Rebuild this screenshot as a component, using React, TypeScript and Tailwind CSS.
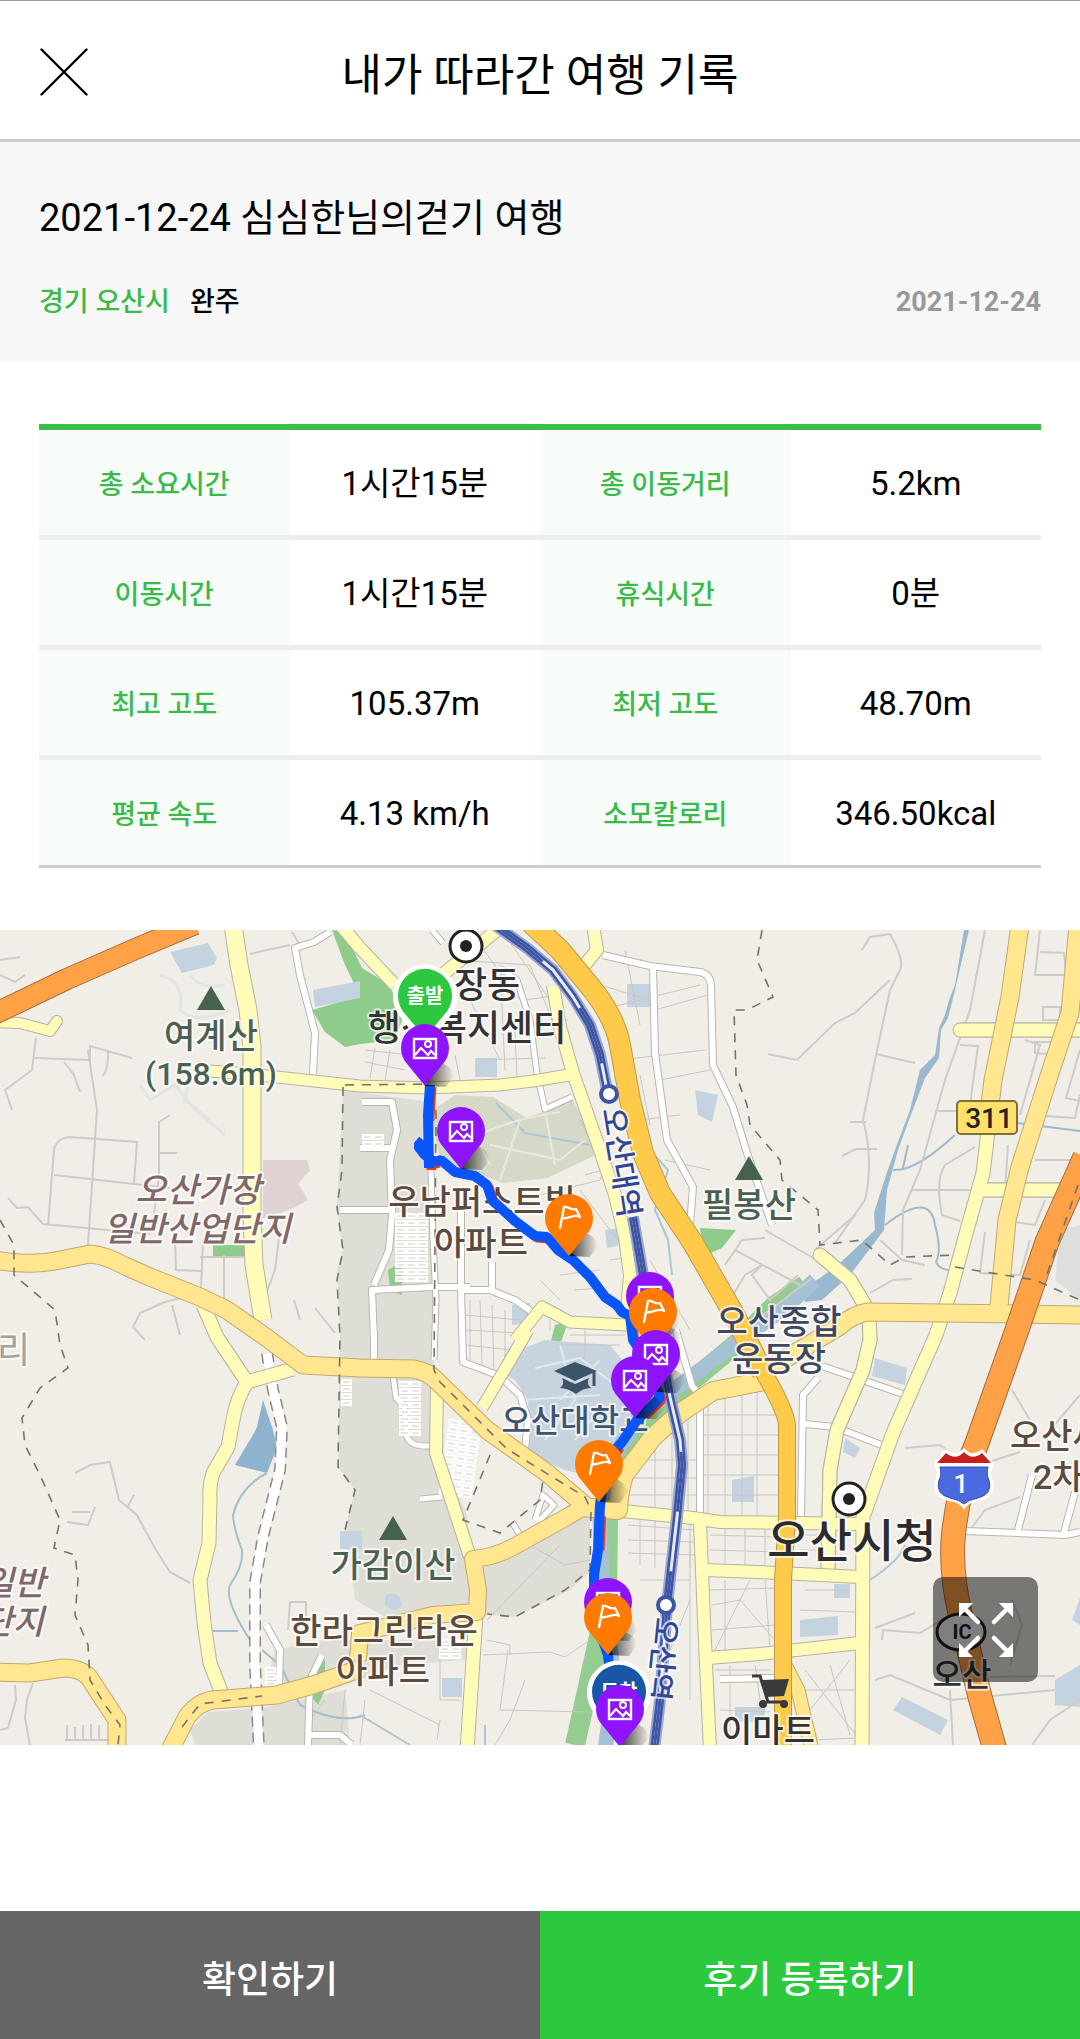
import type { ReactNode } from 'react';

type RoadKind = 'white' | 'pale' | 'yellow' | 'amber' | 'orange';

const ROAD_COLORS: Record<RoadKind, [string, string]> = {
  white: ['#ffffff', '#b9b6b0'],
  pale: ['#fffbb8', '#b7b2a0'],
  yellow: ['#ffe68f', '#c0a870'],
  amber: ['#ffca49', '#b89a50'],
  orange: ['#ffa147', '#a36b3c'],
};

type Road = { w: number; d: string };

/* Casings first and fills second, so junctions of one class open into each other. */
function Roads({ kind, roads, cap = 'butt' }: { kind: RoadKind; roads: Road[]; cap?: 'butt' | 'round' }) {
  const [fill, casing] = ROAD_COLORS[kind];
  return (
    <g fill="none" strokeLinejoin="round" strokeLinecap={cap}>
      {roads.map((r) => (
        <path key={'c' + r.d} d={r.d} stroke={casing} strokeWidth={r.w + 2} />
      ))}
      {roads.map((r) => (
        <path key={'f' + r.d} d={r.d} stroke={fill} strokeWidth={r.w} />
      ))}
    </g>
  );
}

const WHITE: Road[] = [
  { w: 6, d: 'M330 932 L314 942 L295 948 L300 975 L315 1033 L313 1074' },
  { w: 6, d: 'M603 955 L650 966 L700 972 Q710 974 711 985 L713 1065 L733 1107 L747 1153 L772 1225' },
  { w: 6, d: 'M653 967 L655 1053 L667 1140 L693 1187 L690 1225' },
  { w: 5, d: 'M432 930 L443 943 M500 968 L517 980 L530 1020 L537 1073 L545 1109 L572 1097' },
  { w: 6, d: 'M462 1290 L490 1290 L515 1300 L535 1314' },
  { w: 6, d: 'M461 1210 L461 1290 M492 1262 L492 1290 M432 1287 L470 1287 M461 1290 L463 1362 L500 1376 L520 1395 L528 1420 L525 1450' },
  { w: 6, d: 'M374 1285 L389 1250 L392 1215 L390 1160 L397 1130 L392 1102 L362 1102 M360 1148 L390 1148 M340 1210 L395 1210 M374 1340 L372 1290 L432 1287 M374 1330 L374 1362' },
  { w: 5, d: 'M431 1170 L433 1240 L436 1300 L434 1360' },
  { w: 5, d: 'M393 1375 L396 1398 L404 1405 L407 1437 Q411 1447 430 1446 M420 1499 L442 1497' },
  { w: 6, d: 'M676 1330 L692 1386 L700 1395 L700 1516' },
  { w: 6, d: 'M822 1366 L903 1394 M818 1378 L803 1395 L801 1516 M805 1424 L835 1427 L884 1446' },
  { w: 6, d: 'M965 1531 L1066 1535 M1018 1530 L1032 1475 M1064 1533 L1075 1492 M1066 1535 L1080 1532' },
  { w: 6, d: 'M266 1625 L280 1650 L279 1685 M720 1679 L775 1678' },
  { w: 6, d: 'M322 1655 L310 1680 L308 1745 M308 1735 L340 1735 L352 1745' },
  { w: 5, d: 'M512 1522 L520 1535 M535 1520 L543 1495 L554 1505 L538 1522' },
];

const PALE: Road[] = [
  { w: 17, d: 'M233 925 L239 965 L248 1010 L252 1047 L252 1215 L254 1265 L263 1320' },
  { w: 11, d: 'M210 1071 L250 1074 L360 1086 L427 1088 L500 1085 L533 1081 L575 1074' },
  { w: 12, d: 'M338 922 L360 948 L395 985 M436 980 L497 930' },
  { w: 13, d: 'M203 1305 L217 1337 L247 1382 Q236 1400 233 1420 L228 1447 L213 1473 Q209 1485 210 1497 L209 1543 L200 1580 L204 1623 L210 1663 L222 1694 M247 1382 L293 1369' },
  { w: 12, d: 'M593 925 L597 950 L583 967 L567 973 M553 985 L560 1027 L573 1073 L600 1150 L615 1195 L625 1237 L630 1275 L627 1310' },
  { w: 11, d: 'M515 1340 L542 1307 L570 1322 L627 1325 M528 1330 L482 1408' },
  { w: 12, d: 'M437 1385 L436 1453 L470 1557' },
  { w: 13, d: 'M476 1615 L473 1660 L467 1750' },
  { w: 13, d: 'M820 1255 L850 1280 L869 1312 L870 1340 L863 1370 L837 1430 L830 1470 L828 1568' },
  { w: 13, d: 'M960 1030 L1080 1030 M980 1190 L1060 1190' },
  { w: 13, d: 'M990 1105 L987 1140 L983 1173 L967 1230 L950 1293 L936 1335 L893 1433 L863 1517 L862 1750' },
  { w: 12, d: 'M622 1511 L693 1518 L720 1522 L863 1524 M705 1570 L780 1573 L860 1577 M707 1658 L760 1654 L860 1643 M700 1522 L704 1620 L710 1750' },
];

const YELLOW: Road[] = [
  { w: 17, d: 'M-5 1260 Q30 1266 55 1261 L90 1254 Q105 1255 125 1266 L150 1277 L200 1297 L227 1310 L267 1338 L303 1365 L360 1368 L413 1369 Q428 1371 438 1382 L487 1430 L547 1473 L587 1507' },
  { w: 18, d: 'M580 1507 L618 1510 Q619 1490 624 1475 L653 1437 L680 1413 L713 1391 L775 1379' },
  { w: 16, d: 'M590 1503 L567 1517 L513 1547 Q495 1557 473 1559 L478 1590 L477 1612 L433 1615 L360 1633 L358 1660' },
  { w: 17, d: 'M170 1750 L187 1717 Q198 1702 213 1700 L277 1695 L313 1685 L362 1668' },
  { w: 17, d: 'M-5 1672 L30 1673 L63 1668 Q85 1668 92 1682 L117 1720 L117 1750' },
  { w: 17, d: 'M1020 925 L1010 997 L993 1080 L990 1105' },
  { w: 17, d: 'M1078 925 L1070 1013 L1050 1073 L1020 1167 L1007 1220 L998 1317' },
  { w: 17, d: 'M1085 1315 L867 1312 Q852 1315 840 1326 L780 1362 L766 1370' },
  { w: 13, d: 'M785 1665 L798 1690 L812 1750' },
];

const AMBER: Road[] = [
  { w: 20, d: 'M530 922 L560 950 L593 990 Q615 1018 620 1045 L630 1100 L643 1153 L660 1193 L693 1243 L735 1316 L763 1373' },
  { w: 16, d: 'M760 1366 Q786 1410 787 1425 L787 1517 L783 1580 L783 1750' },
];

const ORANGE: Road[] = [
  { w: 20, d: 'M-10 1016 L67 979 L133 950 L195 924' },
  { w: 23, d: 'M1085 1157 L1047 1242 L1017 1330 L977 1443 Q957 1490 953 1540 Q951 1575 960 1613 L980 1697 L995 1750' },
];

/* Local lanes drawn as thin grey lines. */
const LANES = [
  'M0 960 L20 957 M0 975 L15 982 L25 975 M36 1038 L32 1070 L5 1090 L12 1110 M35 1058 L90 1060 L90 1046 L132 1058 M64 1062 L74 1075 L80 1092 M108 1052 Q108 1072 102 1076 M88 1050 L97 1110 L88 1245 M48 1225 L54 1150 Q56 1138 70 1137 L137 1142 L134 1183 M54 1175 L170 1188 M8 1198 L17 1208 L28 1207 L43 1224 L150 1234 M170 1115 L159 1122 L159 1175 L152 1230 M160 1153 L177 1153 M175 1240 L176 1270 L201 1271 M203 1240 L201 1290 M224 1255 L224 1300 M200 1257 L245 1257 M280 1230 L275 1270 L265 1297',
  'M133 1327 L140 1313 L165 1302 L185 1297 M133 1327 L145 1340 M172 1305 L180 1335 M294 1300 L300 1320 M315 1308 L335 1333 M250 954 L290 945 M292 932 L300 945',
  'M75 1473 L90 1465 L110 1462 L119 1500 L137 1515 Q155 1550 170 1572 L190 1583 M134 1495 L128 1506 M67 1522 L88 1525 L95 1507 M72 1512 L90 1512 M15 1685 L16 1700 L8 1728 L0 1730 M33 1683 L27 1700 L25 1718 L30 1745 M65 1740 L110 1740 M67 1725 L67 1740 M75 1727 L75 1740 M83 1725 L83 1740 M91 1724 L91 1740 M99 1725 L99 1740 M288 1630 L290 1602 L306 1602 L306 1622',
  'M862 950 L870 937 L890 934 Q905 960 900 970 L890 990 L875 1060 L863 1120 Q874 1160 865 1200 L835 1243 M890 980 L855 1013 L835 1023 L797 1060 L768 1054 M876 1054 L915 1063 M850 1122 L866 1122 M842 1156 L856 1149 L877 1149',
  'M985 930 L970 1010 L945 1080 L920 1170 L903 1210 L902 1255 M960 1045 L978 1046 L970 1105 M938 1111 L956 1111 M912 1190 L980 1190 M975 1147 L945 1165 Q935 1180 942 1215 L960 1221 M1025 1040 L1040 1045 L1020 1115 M1040 930 L1035 975 L1080 975 M1040 952 L1064 953 L1066 973 M1043 1007 L1060 1007 L1060 1020 L1043 1020 Z M1035 1042 L1052 1042 L1050 1054 L1035 1053 Z M1080 1050 L1066 1098 L1080 1101 M1030 1115 L1075 1118 L1080 1095 M1008 1145 L1005 1190 M1035 1160 L1080 1160 M1045 1200 L1035 1225 L1015 1222 M1030 1240 L1020 1275 L980 1273 L985 1232 M870 1293 L893 1280 L912 1279',
  'M725 1265 L742 1240 L765 1238 M730 1300 L745 1275 L762 1265 L752 1275 L770 1300 L798 1275 M735 1250 L800 1285 M750 1325 L812 1278 M765 1230 L820 1262 M815 1250 L855 1215 M880 1240 L902 1260 L925 1265',
  'M905 1448 L940 1445 L960 1460 M980 1465 L1020 1452 M1012 1390 L1030 1420 M1050 1430 L1080 1395 M970 1530 L985 1510 L1020 1497 M882 1640 L883 1630 L920 1633 L945 1618 M875 1628 L915 1613 M875 1680 L890 1675 L950 1700 L1055 1690 M950 1690 L953 1745 M1010 1665 L1022 1625 L1012 1600 M1032 1745 L1050 1720 L1080 1700 M990 1677 L1055 1676',
];

const BLOCKS = [
  /* lots around the welfare centre */
  'M455 960 L530 965 L560 1040 M480 945 L520 1000 M505 935 L550 1000 M470 1000 L500 1060 M500 965 L505 1070 M525 1000 L560 995 M530 1025 L568 1020 M365 1050 L410 1055 M365 1062 L405 1070 M375 1048 L370 1078 M390 1050 L385 1080 M455 1055 L460 1080 M478 1060 L545 1058 M515 1030 L517 1080',
  'M625 950 L640 1025 M600 985 L650 1000 M600 1010 L700 985 M620 1060 L705 1050 M655 1010 L708 995 M660 1080 L710 1070 M580 1120 L620 1200 M585 1175 L620 1165 M580 1190 L625 1250 M540 1195 L600 1180 L605 1165 M640 1120 L680 1115 M665 1160 L710 1170 M640 1075 L650 1125',
  'M470 1300 L470 1360 M480 1300 L482 1365 M492 1305 L494 1372 M505 1310 L505 1360 M465 1315 L520 1320 M465 1330 L520 1333 M465 1345 L512 1350 M570 1335 L625 1335 M560 1345 L620 1345 M550 1320 L550 1330 M585 1325 L585 1360',
  'M640 1270 L655 1320 M650 1260 L690 1330 M610 1260 L640 1255 M560 1275 L600 1270 M575 1290 L600 1288 M540 1280 L560 1300',
  /* street grid south of the college */
  'M640 1460 L700 1460 M630 1478 L700 1478 M627 1495 L700 1495 M655 1445 L655 1515 M672 1430 L672 1516 M688 1410 L688 1516 M708 1400 L708 1516 M725 1395 L725 1518 M742 1392 L742 1520 M757 1390 L757 1520 M700 1415 L775 1415 M700 1435 L778 1435 M700 1455 L778 1455 M700 1475 L778 1475 M700 1495 L778 1495',
  'M628 1525 L695 1530 M628 1540 L695 1542 M628 1553 L695 1555 M640 1515 L640 1565 M655 1515 L655 1568 M690 1520 L690 1568 M710 1535 L778 1537 M710 1550 L778 1552 M725 1528 L725 1565 M745 1528 L745 1565 M765 1528 L765 1565',
  'M710 1590 L778 1588 M712 1605 L740 1600 L775 1640 M725 1580 L725 1650 M750 1580 L715 1650 M765 1580 L770 1650 M712 1630 L775 1625 M715 1670 L770 1670 M720 1710 L770 1712 M730 1665 L730 1740 M755 1665 L760 1700 M690 1580 L640 1580 M690 1600 L670 1650 M690 1540 L690 1700',
  'M800 1535 L825 1535 M800 1550 L825 1550 M805 1590 L850 1590 M800 1610 L855 1612 M805 1670 L860 1740 M850 1660 L810 1710 M800 1690 L860 1690 M830 1665 L850 1735 M815 1740 L855 1738',
  'M487 1640 L510 1645 L510 1655 M483 1655 L550 1652 L565 1657 L590 1640 M508 1650 L500 1710 L590 1712 M525 1680 L510 1720 L495 1745 M440 1660 L440 1700 L460 1700 M440 1720 L437 1740 M370 1690 L440 1725 M487 1620 L560 1545 M530 1545 L565 1565 L590 1560',
  'M345 1690 L340 1745 M325 1700 L310 1720 M365 1700 L360 1745',
];

/* Apartment blocks: dense white cells. */
function WhiteCells({ x, y, rows, cols, rotate = 0 }: { x: number; y: number; rows: number; cols: number; rotate?: number }) {
  const cells: ReactNode[] = [];
  for (let r = 0; r < rows; r++) {
    for (let c = 0; c < cols; c++) {
      cells.push(
        <rect key={`${r}-${c}`} x={x + c * 11} y={y + r * 7} width="9" height="4" fill="#e8e6df" stroke="#ffffff" strokeWidth="2" />,
      );
    }
  }
  return <g transform={`rotate(${rotate} ${x} ${y})`}>{cells}</g>;
}

type LabelProps = {
  x: number;
  y: number;
  color: string;
  size?: number;
  anchor?: 'start' | 'middle' | 'end';
  italic?: boolean;
  rotate?: number;
  weight?: number;
  children: string;
};

function MapLabel({ x, y, color, size = 34, anchor = 'middle', italic, rotate, weight = 500, children }: LabelProps) {
  return (
    <text
      x={x}
      y={y}
      fontSize={size}
      fontWeight={weight}
      fontStyle={italic ? 'italic' : undefined}
      fill={color}
      stroke="#ffffff"
      strokeOpacity="0.7"
      strokeWidth="4"
      strokeLinejoin="round"
      paintOrder="stroke"
      textAnchor={anchor}
      transform={rotate ? `rotate(${rotate} ${x} ${y})` : undefined}
    >
      {children}
    </text>
  );
}

function Peak({ x, y }: { x: number; y: number }) {
  return <path d={`M${x} ${y} l14 24 h-28 z`} fill="#46624e" />;
}

function CityMark({ x, y }: { x: number; y: number }) {
  return (
    <g>
      <circle cx={x} cy={y} r="16" fill="#fff" stroke="#222" strokeWidth="3" />
      <circle cx={x} cy={y} r="6" fill="#222" />
    </g>
  );
}

function Shadow({ x, y }: { x: number; y: number }) {
  return <path d={`M${x} ${y + 38} l15 -24 q12 4 14 14 l-8 11 z`} fill="url(#pinShadow)" />;
}

function PhotoPin({ x, y }: { x: number; y: number }) {
  return (
    <g>
      <Shadow x={x} y={y} />
      <g transform={`translate(${x} ${y})`}>
        <path d="M0 38 L-17 17 A24 24 0 1 1 17 17 Z" fill="#9013fe" />
        <rect x="-11" y="-9" width="22" height="19" fill="none" stroke="#fff" strokeWidth="2.4" />
        <circle cx="3" cy="-4" r="3" fill="none" stroke="#fff" strokeWidth="2" />
        <path d="M-10 7 L-4 0 L1 5 L3 7 L6 3 L10 7" fill="none" stroke="#fff" strokeWidth="2.2" />
      </g>
    </g>
  );
}

function FlagPin({ x, y }: { x: number; y: number }) {
  return (
    <g>
      <Shadow x={x} y={y} />
      <g transform={`translate(${x} ${y})`}>
        <path d="M0 38 L-17 17 A24 24 0 1 1 17 17 Z" fill="#ff7a00" />
        <path
          d="M-9 10 L-5 -11 C0 -12 2 -7 7 -9 L11 -1 C5 -5 0 2 -7 0"
          fill="none"
          stroke="#fff"
          strokeWidth="2.4"
          strokeLinecap="round"
          strokeLinejoin="round"
        />
      </g>
    </g>
  );
}

function EndPin({ x, y, color, children }: { x: number; y: number; color: string; children: string }) {
  return (
    <g transform={`translate(${x} ${y})`}>
      <path d="M0 50 L-22 21 A30 30 0 1 1 22 21 Z" fill="#fff" stroke="#fff" strokeWidth="4" />
      <path d="M0 42 L-19 19 A27 27 0 1 1 19 19 Z" fill={color} />
      <text y="7" fontSize="20" fontWeight="700" fill="#fff" textAnchor="middle">
        {children}
      </text>
    </g>
  );
}

function Rail({ d }: { d: string }) {
  return (
    <g fill="none" strokeLinejoin="round">
      <path d={d} stroke="#9aa7d0" strokeWidth="12" />
      <path d={d} stroke="#3d55a4" strokeWidth="8" />
      <path d={d} stroke="#e8ecf8" strokeWidth="3" />
      <path d={d} stroke="#3d55a4" strokeWidth="3" strokeDasharray="60 60" />
    </g>
  );
}

const ROUTE =
  'M430 1085 L428 1115 L429 1168 M423 1140 L418 1146 L424 1154 L434 1162 L441 1160 L455 1172 L475 1176 L487 1185 L492 1200 L515 1221 L535 1236 L547 1237 L558 1250 L573 1260 L590 1277 L605 1297 L617 1305 L622 1312 L630 1316 L633 1340 L650 1365 L660 1398 L637 1420 L622 1442 L606 1460 L600 1505 L598 1550 L594 1575 L594 1615 L608 1655 L612 1700';

const BOUNDARY =
  'M0 1220 L14 1245 L14 1275 L55 1310 L60 1345 L68 1368 L40 1388 L22 1418 L25 1445 L40 1475 L60 1520 L54 1548 L75 1555 L78 1580 L75 1615 L88 1645 L90 1680 L105 1705 L120 1725 L118 1745 M345 1085 L430 1084 M343 1087 L342 1170 L337 1207 L343 1250 L337 1280 L340 1337 L338 1467 L355 1490 L345 1530 M436 1110 L434 1370 L440 1382 L507 1449 L585 1497 L591 1510 L590 1570 L565 1590 L515 1617 L487 1614 M490 1455 L463 1520 L500 1533 L540 1500 L543 1480 M182 1727 L200 1704 L262 1696 M762 930 L757 960 L773 997 L747 1010 L734 1010 L736 1075 L747 1105 L750 1125 L780 1160 L782 1180 L818 1210 L820 1245 L862 1240 L890 1265 L905 1257 L955 1255 M955 1267 L1035 1280 L1080 1300 M1078 1185 L1045 1280';

const CAUSEWAY = 'M267 1353 L273 1390 L282 1427 L280 1470 L263 1537 L255 1583 L255 1663 L259 1750';

function TrailMap() {
  return (
    <svg
      viewBox="0 930 1080 815"
      preserveAspectRatio="xMidYMid slice"
      className="block h-full w-full"
      role="img"
      aria-label="여행 경로 지도"
    >
      <defs>
        <linearGradient id="pinShadow" x1="0" x2="1">
          <stop offset="0" stopColor="#000" stopOpacity="0.75" />
          <stop offset="1" stopColor="#000" stopOpacity="0" />
        </linearGradient>
      </defs>
      <rect x="-20" y="910" width="1120" height="860" fill="#f1eee7" />

      {/* land use */}
      <path d="M343 1090 L400 1098 L430 1102 L433 1180 L434 1385 L436 1450 L466 1512 L472 1552 L478 1590 L475 1612 L400 1625 L355 1600 L345 1530 L355 1490 L338 1467 L340 1337 L337 1270 L343 1250 L337 1207 Z" fill="#dfded6" />
      <path d="M478 1562 L515 1550 L590 1512 L590 1572 L570 1590 L515 1617 L478 1614 Z M275 1650 L325 1640 L470 1640 L465 1660 L400 1665 L330 1690 L300 1695 L265 1690 Z M190 1730 L208 1712 L260 1708 L300 1700 L345 1690 L350 1745 L195 1745 Z" fill="#dfded6" />
      <path d="M263 1160 L307 1160 L310 1170 L298 1184 L308 1200 L293 1208 L280 1213 L263 1218 Z" fill="#e0d1d3" />
      <path d="M440 1160 L430 1112 L455 1095 L493 1097 L527 1118 L573 1100 L600 1153 L547 1178 L503 1183 Z" fill="#d6d9c8" />
      <path d="M312 1010 L360 996 L345 965 L332 930 L345 932 L362 968 L390 985 L402 1020 L395 1040 L360 1044 L345 1047 L325 1032 Z M213 1245 L244 1245 L244 1257 L213 1257 Z M700 1228 L736 1230 L722 1248 L704 1256 Z M555 1325 L568 1322 L560 1345 L550 1345 Z M325 1660 L315 1665 L306 1690 L318 1705 L325 1690 Z M388 1270 L402 1262 L402 1295 L390 1290 Z" fill="#8fcc8c" />
      <path d="M313 990 L360 981 L360 998 L315 1007 Z M170 952 L208 943 L217 958 L214 965 L182 973 Z M627 984 L650 984 L650 1007 L627 1007 Z M475 1058 L497 1058 L497 1077 L475 1077 Z M605 1230 L620 1228 L620 1245 L607 1248 Z M512 1305 L530 1303 L530 1323 L512 1325 Z M695 1090 L718 1095 L712 1122 L698 1115 Z M875 1358 L907 1368 L905 1385 L872 1376 Z M845 1438 L860 1448 L855 1458 L843 1452 Z M732 1480 L754 1476 L754 1502 L732 1502 Z M800 1620 L838 1616 L838 1635 L800 1637 Z M834 1584 L850 1584 L850 1598 L834 1598 Z M902 1697 L948 1720 L940 1735 L893 1710 Z M1055 1680 L1080 1665 L1080 1707 L1055 1705 Z M1072 1620 L1080 1598 L1080 1625 Z M442 1678 L462 1678 L462 1697 L442 1697 Z M340 1531 L362 1531 L362 1549 L340 1549 Z M735 1707 L765 1707 L765 1722 L735 1722 Z M385 1595 Q400 1590 402 1605 Q395 1615 385 1605 Z" fill="#c3d3e0" />
      <path d="M505 1355 L545 1340 L610 1345 L650 1395 L660 1400 L630 1445 L605 1480 L565 1470 L530 1455 L528 1400 L515 1380 L500 1372 Z" fill="#c7d3de" />
      <path d="M535 1368 L580 1358 L615 1385 M560 1345 L575 1400 L545 1440 M600 1360 L560 1400 M520 1400 L600 1395 M575 1440 L600 1410" stroke="#e1e8ee" strokeWidth="2" fill="none" />
      <path d="M160 975 Q185 980 180 1010 Q195 1025 230 1010 M190 975 Q200 990 225 985 M140 1085 L150 1100 L175 1085 L195 1110 L225 1135 M190 1075 L185 1100 L210 1120" stroke="#e2e6df" strokeWidth="3" fill="none" />
      <path d="M1060 1230 L1080 1225 L1080 1300 L1055 1280 Z" fill="#dedfdd" />

      {/* water */}
      <path d="M263 1400 L257 1427 L254 1433 L235 1465 L267 1473 L277 1448 L273 1430 Z" fill="#8fb3cf" />
      <path d="M267 1473 Q240 1487 233 1515 Q234 1530 242 1550 Q244 1565 230 1585 Q224 1600 250 1640 M213 1631 L238 1631 M262 1650 L280 1665 L300 1705 Q340 1725 365 1715" fill="none" stroke="#9fc0cc" strokeWidth="2" />
      <path d="M969 930 L964 930 L955 985 L949 1000 L945 1015 L939 1028 L935 1055 L920 1070 L910 1110 L895 1150 L886 1175 L874 1213 L875 1230 L838 1265 L803 1290 L805 1302 L822 1300 L850 1275 L884 1230 L887 1190 L898 1150 L909 1120 L925 1078 L939 1058 L941 1030 L948 1018 L955 990 Z" fill="#9ab8cf" />
      <path d="M893 1170 Q915 1172 955 1135 M903 1168 L908 1145 M885 1225 Q930 1190 935 1225 Q942 1250 936 1262 Q940 1272 960 1270 M1017 1123 L1080 1131" fill="none" stroke="#9fb9cd" strokeWidth="2" />
      <path d="M645 1145 L668 1170 L655 1210 L668 1240 L672 1275 M496 1103 L525 1133 L590 1145 M870 1580 Q900 1560 905 1545 M360 1715 L410 1745 M485 1725 L485 1745" fill="none" stroke="#adc6d3" strokeWidth="2" />
      <path d="M805 1285 L775 1305 L735 1345 L675 1395 L640 1425 L620 1455 L608 1520 L607 1600 L585 1700 L575 1745" fill="none" stroke="#95cc91" strokeWidth="20" strokeLinejoin="round" />
      <path d="M815 1280 L785 1308 L740 1340 L680 1385 L640 1415 L612 1460 L600 1517 L603 1600 L615 1680 L605 1750" fill="none" stroke="#a6c0d4" strokeWidth="15" strokeLinejoin="round" />

      {/* lanes */}
      <g fill="none" stroke="#cfccc8" strokeWidth="2">
        {LANES.map((d) => (
          <path key={d} d={d} />
        ))}
        {BLOCKS.map((d) => (
          <path key={d} d={d} strokeWidth="1" stroke="#c9c6c2" />
        ))}
      </g>
      <path d="M450 1150 Q500 1120 560 1112 M500 1180 L520 1120 M490 1145 L560 1160 L585 1140 M455 1125 Q480 1140 490 1165 M545 1110 L555 1165" stroke="#e9eadd" strokeWidth="2" fill="none" />

      <Roads kind="white" roads={WHITE} />
      <WhiteCells x={396} y={1214} rows={10} cols={3} />
      <WhiteCells x={363} y={1135} rows={2} cols={2} />
      <WhiteCells x={400} y={1382} rows={8} cols={2} />
      <WhiteCells x={450} y={1420} rows={11} cols={3} rotate={8} />
      <WhiteCells x={342} y={1380} rows={4} cols={1} />
      <WhiteCells x={440} y={1640} rows={3} cols={2} />
      <WhiteCells x={266} y={1668} rows={3} cols={1} />
      <g fill="none" strokeLinejoin="round">
        <path d={CAUSEWAY} stroke="#8d8a84" strokeWidth="12" strokeDasharray="10 6" />
        <path d={CAUSEWAY} stroke="#fff" strokeWidth="9" />
      </g>
      <Roads kind="pale" roads={[{ w: 10, d: 'M-5 1022 L20 1023 L50 1031 L57 1021' }, ...PALE.slice(8, 10)]} cap="round" />
      <Roads kind="pale" roads={PALE} />
      <Roads kind="yellow" roads={YELLOW} />
      <Roads kind="amber" roads={AMBER} />
      <Roads kind="orange" roads={ORANGE} />

      {/* administrative boundaries */}
      <path d={BOUNDARY} fill="none" stroke="#77736b" strokeWidth="1.6" strokeDasharray="9 8" />

      <Rail d="M495 925 L527 948 L553 970 L573 997 L590 1025 L600 1055 L607 1090" />
      <Rail d="M633 1217 L643 1275 L660 1340 L670 1397 L680 1440 L682 1465 L677 1517 L667 1605 L660 1700 L654 1750" />
      <circle cx="609" cy="1094" r="8" fill="#fff" stroke="#3d55a4" strokeWidth="4" />
      <circle cx="666" cy="1605" r="8" fill="#fff" stroke="#3d55a4" strokeWidth="4" />

      {/* road shields */}
      <rect x="957" y="1101" width="60" height="33" rx="4" fill="#ffe069" stroke="#7d7040" strokeWidth="2" />
      <text x="989" y="1128" fontSize="28" fontWeight="500" fill="#222" textAnchor="middle">311</text>
      <path d="M936 1463 L946 1451 Q956 1459 964 1450 Q972 1459 982 1451 L992 1463 L989 1474 Q999 1496 977 1500 Q968 1501 964 1507 Q960 1501 951 1500 Q929 1496 939 1474 Z" fill="#fff" stroke="#fff" strokeWidth="3" />
      <path d="M937 1463 L946 1453 Q956 1461 964 1452 Q972 1461 982 1453 L991 1463 Z" fill="#c81e1e" />
      <path d="M940 1467 L988 1467 Q986 1475 989 1480 Q993 1494 978 1498 Q968 1500 964 1504 Q960 1500 950 1498 Q935 1494 939 1480 Q942 1475 940 1467 Z" fill="#4a6be0" stroke="#3450a8" />
      <text x="961" y="1493" fontSize="26" fontWeight="500" fill="#fff" textAnchor="middle">1</text>
      <ellipse cx="961" cy="1632" rx="24" ry="18" fill="#fff" stroke="#222" strokeWidth="3" />
      <text x="962" y="1639" fontSize="20" fontWeight="700" fill="#222" textAnchor="middle">IC</text>

      {/* points of interest */}
      <Peak x={211} y={986} />
      <Peak x={749} y={1156} />
      <Peak x={393} y={1516} />
      <CityMark x={466} y={946} />
      <CityMark x={849} y={1499} />
      <path d="M554 1371 L575 1362 L597 1371 L575 1381 Z M562 1378 L575 1384 L589 1378 Q586 1384 591 1388 Q583 1388 576 1394 Q568 1388 560 1388 Q565 1384 562 1378 Z" fill="#3c5468" />
      <path d="M594 1372 L594 1386" stroke="#3c5468" strokeWidth="3" />
      <path d="M752 1676 L760 1676 L768 1702 L785 1702" fill="none" stroke="#3a3a3a" strokeWidth="3" />
      <path d="M760 1680 L789 1679 L784 1696 L766 1697 Z" fill="#3a3a3a" />
      <circle cx="763" cy="1704" r="4" fill="#3a3a3a" />
      <circle cx="784" cy="1704" r="4" fill="#3a3a3a" />

      <MapLabel x={211} y={1048} color="#4a6152">여계산</MapLabel>
      <MapLabel x={211} y={1085} color="#4a6152" size={32}>(158.6m)</MapLabel>
      <MapLabel x={198} y={1202} color="#806768" italic>오산가장</MapLabel>
      <MapLabel x={197} y={1241} color="#806768" italic>일반산업단지</MapLabel>
      <MapLabel x={30} y={1363} color="#a5a19c" size={36} anchor="end" weight={400}>리</MapLabel>
      <MapLabel x={454} y={998} color="#333" anchor="start" size={36}>장동</MapLabel>
      <MapLabel x={467} y={1041} color="#333" size={36}>행정복지센터</MapLabel>
      <MapLabel x={482} y={1214} color="#5a4b3d">우남퍼스트빌</MapLabel>
      <MapLabel x={481} y={1255} color="#5a4b3d">아파트</MapLabel>
      <MapLabel x={749} y={1217} color="#4a6152">필봉산</MapLabel>
      <MapLabel x={779} y={1334} color="#3f4760">오산종합</MapLabel>
      <MapLabel x={779} y={1371} color="#3f4760">운동장</MapLabel>
      <MapLabel x={575} y={1432} color="#3d5570" size={32}>오산대학교</MapLabel>
      <MapLabel x={852} y={1557} color="#2c2c2c" size={46}>오산시청</MapLabel>
      <MapLabel x={1010} y={1448} color="#5a4b3d" anchor="start">오산세</MapLabel>
      <MapLabel x={1033} y={1489} color="#5a4b3d" anchor="start">2차</MapLabel>
      <MapLabel x={393} y={1577} color="#4a6152">가감이산</MapLabel>
      <MapLabel x={384} y={1643} color="#5a4b3d">한라그린타운</MapLabel>
      <MapLabel x={383} y={1683} color="#5a4b3d">아파트</MapLabel>
      <MapLabel x={45} y={1595} color="#806768" anchor="end" italic>일반</MapLabel>
      <MapLabel x={44} y={1634} color="#806768" anchor="end" italic>단지</MapLabel>
      <MapLabel x={768} y={1743} color="#333">이마트</MapLabel>
      <MapLabel x={962} y={1686} color="#333" size={32}>오산</MapLabel>
      <MapLabel x={611} y={1164} color="#2f4796" size={30} rotate={81}>오산대역</MapLabel>
      <MapLabel x={652} y={1658} color="#2f4796" size={30} rotate={96}>오산역</MapLabel>

      {/* walked route over the planned one */}
      <g fill="none" strokeLinejoin="bevel">
        <path d={ROUTE} stroke="#f03c14" strokeWidth="9" transform="translate(2 2)" strokeDasharray="34 40" />
        <path d={ROUTE} stroke="#0a55fa" strokeWidth="10" />
      </g>

      <EndPin x={425} y={996} color="#2dc83f">출발</EndPin>
      <PhotoPin x={425} y={1048} />
      <PhotoPin x={461} y={1131} />
      <FlagPin x={569} y={1218} />
      <PhotoPin x={650} y={1296} />
      <FlagPin x={653} y={1312} />
      <PhotoPin x={656} y={1354} />
      <PhotoPin x={635} y={1380} />
      <FlagPin x={599} y={1464} />
      <PhotoPin x={608} y={1602} />
      <FlagPin x={608} y={1617} />
      <EndPin x={619} y={1692} color="#1856a8">도착</EndPin>
      <PhotoPin x={620} y={1709} />
    </svg>
  );
}

const ROWS = [
  ['총 소요시간', '1시간15분', '총 이동거리', '5.2km'],
  ['이동시간', '1시간15분', '휴식시간', '0분'],
  ['최고 고도', '105.37m', '최저 고도', '48.70m'],
  ['평균 속도', '4.13 km/h', '소모칼로리', '346.50kcal'],
];

function StatLabel({ children }: { children: ReactNode }) {
  return (
    <th scope="row" className="bg-[#f7fcf8] pt-1 text-[27px] font-medium text-[#3bb94b]">
      {children}
    </th>
  );
}

export default function App() {
  return (
    <div className="flex min-h-screen flex-col bg-white font-[family-name:Roboto,'Noto_Sans_CJK_KR',sans-serif] text-black">
      <header className="grid h-[142px] shrink-0 grid-cols-[1fr_auto_1fr] items-center border-t border-b-3 border-t-[#999] border-b-[#ccc] px-10 pt-1">
        <button type="button" aria-label="닫기" className="h-12 w-12">
          <svg viewBox="0 0 48 48" className="h-full w-full" fill="none" stroke="#000" strokeWidth="2.4" strokeLinecap="round">
            <path d="M1.5 1.5 L46.5 46.5 M46.5 1.5 L1.5 46.5" />
          </svg>
        </button>
        <h1 className="pt-2 text-[44px] leading-none">내가 따라간 여행 기록</h1>
      </header>

      <section className="flex shrink-0 flex-col gap-9 bg-[#f7f7f7] px-[39px] pt-12 pb-10">
        <h2 className="text-[38px] leading-[56px]">2021-12-24 심심한님의걷기 여행</h2>
        <div className="flex items-center text-[27px] leading-10 font-medium">
          <span className="text-[#3bb94b]">경기 오산시</span>
          <span className="ml-5">완주</span>
          <time dateTime="2021-12-24" className="ml-auto font-bold text-[#999]">2021-12-24</time>
        </div>
      </section>

      <div className="shrink-0 px-[39px] py-[62px]">
        <table className="w-full table-fixed border-separate border-spacing-0 border-t-6 border-b-3 border-t-[#3bbf4b] border-b-[#ccc]">
          <tbody>
            {ROWS.map(([a, b, c, d]) => (
              <tr
                key={a}
                className="h-[110px] text-center leading-10 [&>*]:border-b-5 [&>*]:border-[#ededed] last:h-[105px] last:[&>*]:border-b-0"
              >
                <StatLabel>{a}</StatLabel>
                <td className="pt-0.5 text-[33px]">{b}</td>
                <StatLabel>{c}</StatLabel>
                <td className="pt-0.5 text-[33px]">{d}</td>
              </tr>
            ))}
          </tbody>
        </table>
      </div>

      <section className="relative aspect-[216/163] w-full shrink-0 overflow-hidden">
        <TrailMap />
        <button
          type="button"
          aria-label="지도 크게 보기"
          className="absolute right-[42px] bottom-[63px] flex h-[105px] w-[105px] items-center justify-center rounded-[10px] bg-black/50"
        >
          <svg viewBox="0 0 54 54" className="h-[54px] w-[54px]" fill="#fff" stroke="#fff" strokeLinecap="round">
            <path stroke="none" d="M0 0 H14 L0 14 Z M54 0 H40 L54 14 Z M0 54 H14 L0 40 Z M54 54 H40 L54 40 Z" />
            <path strokeWidth="4.5" d="M5 5 L19 19 M49 5 L35 19 M5 49 L19 35 M49 49 L35 35" />
          </svg>
        </button>
      </section>

      <footer className="mt-auto grid h-[128px] shrink-0 grid-cols-2 text-[37px] font-medium text-white">
        <button type="button" className="bg-[#666] pt-3">확인하기</button>
        <button type="button" className="bg-[#2cc83e] pt-3">후기 등록하기</button>
      </footer>
    </div>
  );
}
